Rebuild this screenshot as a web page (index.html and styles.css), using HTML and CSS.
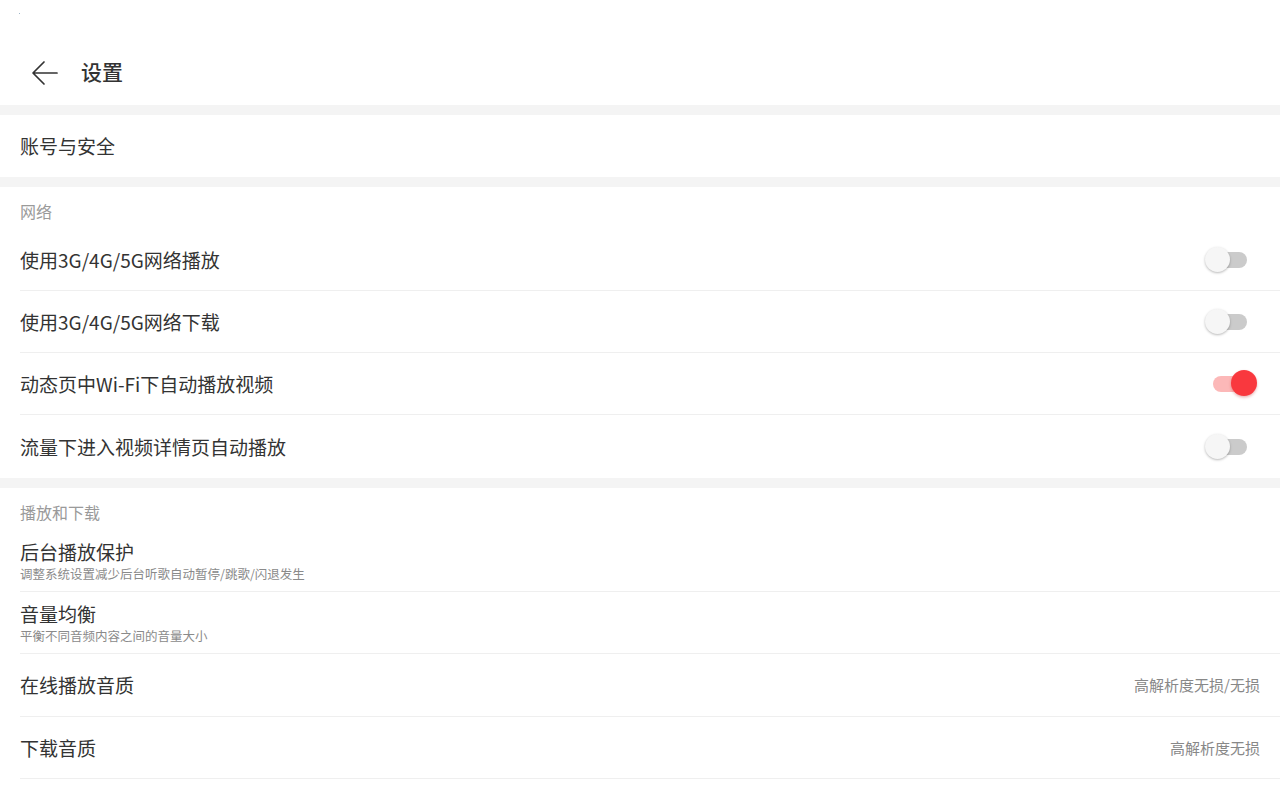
FILE: index.html
```html
<!DOCTYPE html>
<html lang="zh-CN">
<head>
<meta charset="utf-8">
<title>设置</title>
<link rel="stylesheet" href="styles.css">
</head>
<body>
<div class="page">
  <div class="statusbar"><span class="speck"></span></div>
  <header class="header">
    <svg class="back" width="28" height="26" viewBox="0 0 28 26" aria-hidden="true">
      <path d="M26 13 H2.5 M13 2 L2 13 L13 24" fill="none" stroke="#333" stroke-width="1.7" stroke-linecap="round" stroke-linejoin="round"/>
    </svg>
    <h1 class="title">设置</h1>
  </header>

  <div class="gap"></div>
  <section class="group">
    <div class="row row-single no-line"><div class="row-inner"><span class="row-title">账号与安全</span></div></div>
  </section>

  <div class="gap"></div>
  <section class="group">
    <div class="group-head">网络</div>
    <div class="row"><div class="row-inner"><span class="row-title">使用3G/4G/5G网络播放</span><span class="switch"><span class="track"></span><span class="knob"></span></span></div></div>
    <div class="row"><div class="row-inner"><span class="row-title">使用3G/4G/5G网络下载</span><span class="switch"><span class="track"></span><span class="knob"></span></span></div></div>
    <div class="row"><div class="row-inner"><span class="row-title">动态页中Wi-Fi下自动播放视频</span><span class="switch on"><span class="track"></span><span class="knob"></span></span></div></div>
    <div class="row row-tall no-line"><div class="row-inner"><span class="row-title">流量下进入视频详情页自动播放</span><span class="switch"><span class="track"></span><span class="knob"></span></span></div></div>
  </section>

  <div class="gap"></div>
  <section class="group">
    <div class="group-head">播放和下载</div>
    <div class="row row-double"><div class="row-inner"><div class="stack"><span class="row-title">后台播放保护</span><span class="row-sub">调整系统设置减少后台听歌自动暂停/跳歌/闪退发生</span></div></div></div>
    <div class="row row-double"><div class="row-inner"><div class="stack"><span class="row-title">音量均衡</span><span class="row-sub">平衡不同音频内容之间的音量大小</span></div></div></div>
    <div class="row row-tall"><div class="row-inner"><span class="row-title">在线播放音质</span><span class="row-value">高解析度无损/无损</span></div></div>
    <div class="row"><div class="row-inner"><span class="row-title">下载音质</span><span class="row-value">高解析度无损</span></div></div>
  </section>
</div>
</body>
</html>
```

FILE: styles.css
```css
* { box-sizing: border-box; }
html, body {
  margin: 0;
  padding: 0;
  background: #fff;
}
body {
  width: 1280px;
  height: 800px;
  overflow: hidden;
  font-family: "Noto Sans CJK SC", "Noto Sans", "Liberation Sans", sans-serif;
  color: #333;
}
.statusbar {
  height: 40px;
  position: relative;
}
.speck {
  position: absolute;
  left: 19px;
  top: 13px;
  width: 1px;
  height: 1px;
  background: #9fb6c8;
}
.header {
  height: 65px;
  display: flex;
  align-items: center;
  padding-left: 31px;
}
.back {
  display: block;
  margin-top: 1px;
}
.title {
  margin: -3px 0 0 22px;
  font-size: 21px;
  font-weight: 500;
  line-height: 28px;
  color: #333;
}
.gap {
  height: 10px;
  background: #f4f4f4;
}
.group-head {
  height: 42px;
  padding: 15px 0 0 20px;
  font-size: 16px;
  line-height: 18px;
  color: #9a9a9a;
}
.row {
  height: 62px;
  padding-left: 20px;
}
.row-tall { height: 63px; }
.row-inner {
  height: 100%;
  display: flex;
  align-items: center;
  justify-content: space-between;
  padding-right: 20px;
  border-bottom: 1px solid #efefef;
}
.no-line .row-inner { border-bottom: none; }
.row-title {
  font-size: 19px;
  line-height: 24px;
  color: #333;
}
.row-double .row-inner {
  align-items: flex-start;
}
.stack {
  display: flex;
  flex-direction: column;
  padding-top: 10px;
}
.row-sub {
  font-size: 12.5px;
  line-height: 20px;
  color: #8a8a8a;
}
.row-value {
  font-size: 15px;
  line-height: 20px;
  color: #888;
}
.switch {
  position: relative;
  width: 52px;
  height: 26px;
  margin-right: 3px;
}
.switch .track {
  position: absolute;
  left: 8px;
  top: 5px;
  width: 34px;
  height: 16px;
  border-radius: 8px;
  background: #cbcbcb;
}
.switch .knob {
  position: absolute;
  left: 0;
  top: 0;
  width: 25px;
  height: 25px;
  border-radius: 50%;
  background: #f6f6f6;
  box-shadow: 0 1px 2.5px rgba(0, 0, 0, 0.28);
}
.switch.on .track {
  background: #fcb8b8;
}
.switch.on .knob {
  left: 26px;
  width: 26px;
  height: 26px;
  top: -0.5px;
  background: #f9383e;
  box-shadow: 0 1.5px 3px rgba(180, 0, 0, 0.3);
}
```
